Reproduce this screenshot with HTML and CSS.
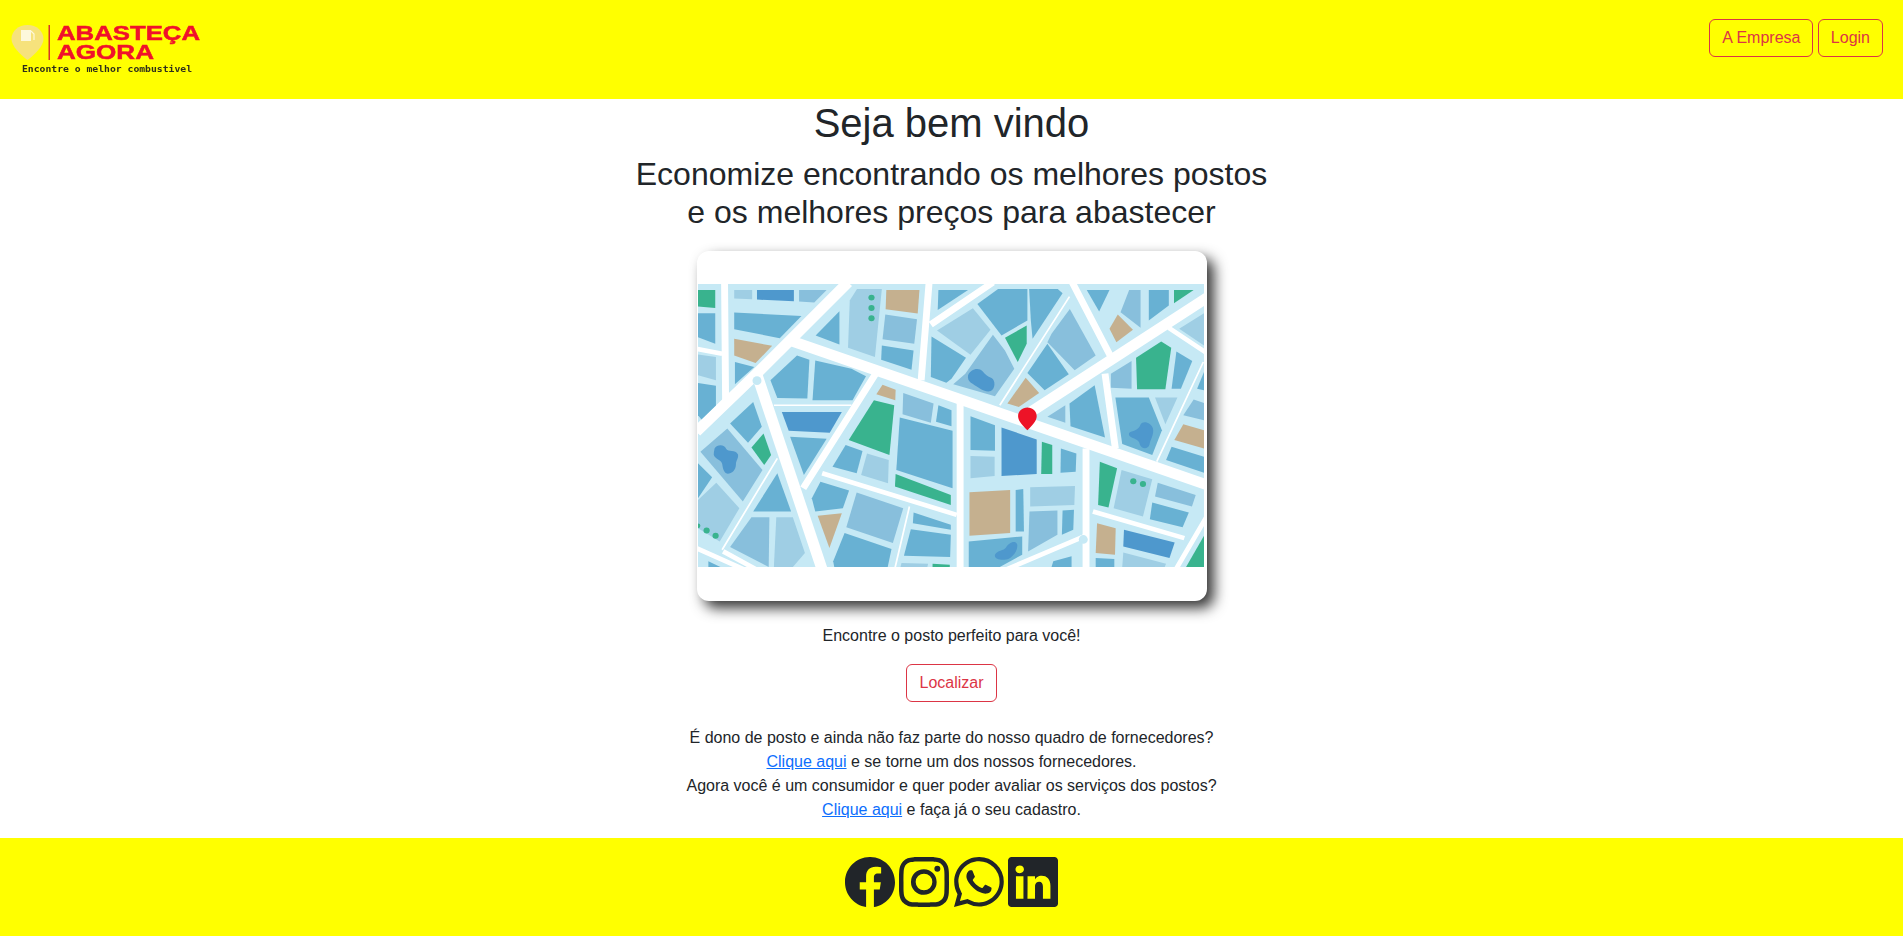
FILE: index.html
```html
<!DOCTYPE html>
<html lang="pt-BR">
<head>
<meta charset="UTF-8">
<meta name="viewport" content="width=device-width, initial-scale=1.0">
<title>Abasteça Agora</title>
<link rel="stylesheet" href="styles.css">
</head>
<body>

<header class="topbar">
    <a class="logo" href="#">
        <svg class="logo-art" viewBox="0 0 210 99" width="210" height="99">
            <path class="logo-pin" d="M27.500 25c9 0 16 6 16 14 0 7-9 16-16 21-7-5-16-14-16-21 0-8 7-14 16-14z"/>
            <path class="logo-pump" d="M21 30h10v11H21z"/>
            <path class="logo-hose" d="M31 31l3 3v6"/>
            <rect class="logo-bar" x="48.500" y="25" width="1.500" height="35"/>
            <text class="logo-name" x="57" y="40" textLength="143" lengthAdjust="spacingAndGlyphs">ABASTEÇA</text>
            <text class="logo-name" x="57" y="59" textLength="97" lengthAdjust="spacingAndGlyphs">AGORA</text>
            <text class="logo-tag" x="22" y="72" textLength="170" lengthAdjust="spacingAndGlyphs">Encontre o melhor combustivel</text>
        </svg>
    </a>
    <nav class="topbar-nav">
        <a class="btn" href="#">A Empresa</a>
        <a class="btn" href="#">Login</a>
    </nav>
</header>

<main class="content">
    <h1>Seja bem vindo</h1>
    <h2>Economize encontrando os melhores postos<br>e os melhores preços para abastecer</h2>

    <div class="map-card">
        <svg class="map" viewBox="55 130 1467 852" preserveAspectRatio="none">
            <rect class="m-edge" x="55" y="130" width="1467" height="852"/>
            <g class="roads">
                <path d="M322 300L1540 738"/>
                <path d="M490 125L225 400L50 575"/>
                <path d="M225 400L415 990"/>
                <path d="M1020 515L1540 165"/>
                <path class="r-mid" d="M815 470V990M1180 625V990M725 125L702 420M910 125L730 252M1140 125L1250 345M132 125L135 480M570 400L360 745M1235 400L1265 625"/>
                <path class="r-thin" d="M1420 262L1530 338M415 700L805 825M1200 815L1465 895M1530 830L1440 990M1178 888L925 1000M50 925L190 990M50 325L125 340M128 935L225 990"/>
                <path class="r-line" d="M1132 168L930 495M285 655L125 930M1520 365L1385 665M668 800L625 990M275 495H500"/>
            </g>
            <g class="m-mid">
                <polygon points="55,218 105,218 105,310 55,290"/>
                <polygon points="55,428 107,436 107,496 65,538 55,525"/>
                <polygon points="160,216 355,226 292,293 160,266"/>
                <polygon points="162,365 218,380 162,432"/>
                <polygon points="465,212 465,312 396,285"/>
                <polygon points="588,315 680,330 674,388 586,358"/>
                <polygon points="752,148 838,148 750,208"/>
                <polygon points="865,190 925,145 1010,145 1010,240 935,285"/>
                <polygon points="1015,145 1098,145 1112,158 1025,295 1020,240"/>
                <polygon points="732,288 832,352 790,415 775,427 730,410"/>
                <polygon points="1068,310 1130,402 1060,450 1010,398"/>
                <polygon points="1182,148 1248,148 1218,213"/>
                <polygon points="1362,148 1420,148 1420,195 1362,240"/>
                <polygon points="1442,333 1488,362 1455,445 1428,445"/>
                <polygon points="1522,395 1502,445 1522,450"/>
                <polygon points="1428,620 1522,650 1522,698 1412,660"/>
                <polygon points="1265,472 1362,472 1400,570 1372,645 1285,612"/>
                <polygon points="1132,490 1205,435 1235,592 1135,558"/>
                <polygon points="752,495 790,510 790,558 745,545"/>
                <polygon points="640,532 793,572 793,745 630,690"/>
                <polygon points="483,615 532,633 515,700 445,680"/>
                <polygon points="322,590 428,596 362,705"/>
                <polygon points="342,345 378,358 372,475 285,473 265,420"/>
                <polygon points="395,360 500,385 542,408 503,480 387,480"/>
                <polygon points="215,485 240,560 200,608 148,550"/>
                <polygon points="55,670 96,712 55,775"/>
                <polygon points="285,700 325,815 215,815"/>
                <polygon points="85,965 120,982 85,982"/>
                <polygon points="410,725 493,752 475,805 395,815 385,775"/>
                <polygon points="480,880 616,928 605,982 450,982 447,965"/>
                <polygon points="680,818 788,855 788,870 678,850"/>
                <polygon points="672,868 788,885 786,952 652,948"/>
                <polygon points="845,528 916,555 916,632 845,630"/>
                <polygon points="1107,625 1152,640 1150,695 1106,698"/>
                <polygon points="976,750 998,747 1000,875 976,875"/>
                <polygon points="1112,812 1145,810 1143,870 1110,885"/>
                <polygon points="840,905 995,890 995,945 930,982 840,982"/>
                <polygon points="1372,788 1478,818 1460,862 1365,838"/>
                <polygon points="1208,955 1262,958 1262,982 1208,982"/>
                <polygon points="1085,965 1138,950 1138,982 1080,982"/>
            </g>
            <g class="m-soft">
                <polygon points="348,148 428,148 392,186 348,183"/>
                <polygon points="598,222 690,236 682,310 590,296"/>
                <polygon points="910,283 945,330 972,385 916,468 795,432 830,400"/>
                <polygon points="1133,205 1208,345 1147,390 1068,305 1080,280"/>
                <polygon points="1305,148 1338,148 1338,262 1280,215"/>
                <polygon points="1312,362 1312,445 1252,442 1252,400"/>
                <polygon points="1492,478 1522,488 1522,540 1462,525"/>
                <polygon points="1120,495 1120,548 1068,530"/>
                <polygon points="650,458 738,490 730,548 648,522"/>
                <polygon points="140,565 242,690 185,785 62,635"/>
                <polygon points="210,832 262,832 260,982 148,922"/>
                <polygon points="515,758 650,805 620,910 485,862"/>
                <polygon points="1016,815 1097,812 1097,885 1012,935"/>
                <polygon points="1388,728 1498,765 1487,800 1380,770"/>
            </g>
            <g class="m-pale">
                <polygon points="55,342 107,350 107,420 55,405"/>
                <polygon points="160,148 212,148 212,176 160,174"/>
                <polygon points="495,180 516,145 588,145 568,350 490,322"/>
                <polygon points="748,270 852,203 903,268 845,343"/>
                <polygon points="1522,218 1522,315 1450,265"/>
                <polygon points="1380,472 1445,472 1410,552"/>
                <polygon points="545,640 608,660 606,730 528,705"/>
                <polygon points="108,728 175,805 118,905 55,865 55,780"/>
                <polygon points="282,832 330,832 365,940 330,982 275,982"/>
                <polygon points="645,970 722,972 720,982 642,982"/>
                <polygon points="845,648 915,650 915,708 845,715"/>
                <polygon points="1018,742 1148,738 1146,795 1018,800"/>
                <polygon points="1283,690 1372,718 1345,830 1260,805"/>
                <polygon points="1288,938 1412,972 1408,982 1285,982"/>
            </g>
            <g class="m-deep">
                <polygon points="226,148 333,148 333,182 226,177"/>
                <polygon points="298,515 472,515 437,578 318,572"/>
                <polygon points="935,562 1037,598 1037,702 935,708"/>
                <polygon points="1290,870 1437,908 1422,955 1288,920"/>
                <path d="M838 405c6-18 30-26 42-12 8 10 14 16 26 20 12 6 12 34-4 40-18 4-42-18-56-26-6-4-10-12-8-22z"/>
                <path d="M103 625c8-14 30-12 34 2 6 10 26 0 34 16 2 12-6 18-6 30 0 18-12 28-24 28-12-2-14-18-16-30-4-16-28-14-24-34z"/>
                <path d="M1310 575c14-4 24-10 28-22 8-14 32-4 36 12 4 18-8 34-10 48-4 16-24 14-28 0-2-12-12-16-22-20-12-4-12-16-4-18z"/>
                <path d="M916 945c6-14 26-12 32-22 6-12 26-24 32-10 4 14-8 36-24 44-14 6-44 4-40-12z"/>
            </g>
            <g class="m-green">
                <polygon points="55,148 105,148 105,202 55,198"/>
                <polygon points="1435,148 1492,148 1435,188"/>
                <polygon points="945,292 1008,255 1008,310 982,365"/>
                <polygon points="1325,352 1398,303 1427,322 1410,447 1328,447"/>
                <polygon points="565,480 624,495 610,645 492,600"/>
                <polygon points="628,702 788,765 788,795 626,740"/>
                <polygon points="245,580 267,645 247,675 210,622"/>
                <polygon points="735,972 785,975 785,982 735,982"/>
                <polygon points="1052,605 1082,615 1082,702 1050,702"/>
                <polygon points="1220,665 1270,685 1245,803 1215,795"/>
                <polygon points="1522,888 1522,982 1470,982"/>
                <circle cx="558" cy="171" r="9"/>
                <circle cx="558" cy="202" r="9"/>
                <circle cx="558" cy="233" r="9"/>
                <circle cx="80" cy="872" r="9"/>
                <circle cx="106" cy="888" r="9"/>
                <circle cx="55" cy="858" r="7"/>
                <circle cx="1317" cy="724" r="9"/>
                <circle cx="1345" cy="732" r="9"/>
            </g>
            <g class="m-tan">
                <polygon points="601,148 697,148 692,219 599,206"/>
                <polygon points="160,295 270,316 222,368 160,345"/>
                <polygon points="1005,412 1044,458 985,500 952,490"/>
                <polygon points="1272,222 1316,268 1268,305 1248,265"/>
                <polygon points="1462,552 1522,570 1522,625 1436,600"/>
                <polygon points="590,433 628,448 627,480 572,462"/>
                <polygon points="402,828 472,820 436,925"/>
                <polygon points="842,757 960,750 960,880 842,888"/>
                <polygon points="1212,850 1266,865 1264,945 1208,940"/>
            </g>
            <circle class="m-edge" cx="226" cy="421" r="13"/>
            <circle class="m-edge" cx="1172" cy="899" r="13"/>
            <path class="m-pin" d="M1010 502c15 0 27 11 27 26 0 15-15 30-27 42-12-12-27-27-27-42 0-15 12-26 27-26z"/>
        </svg>
    </div>

    <p class="lead">Encontre o posto perfeito para você!</p>
    <a class="btn" href="#">Localizar</a>

    <p class="info">
        É dono de posto e ainda não faz parte do nosso quadro de fornecedores?<br>
        <a href="#">Clique aqui</a> e se torne um dos nossos fornecedores.<br>
        Agora você é um consumidor e quer poder avaliar os serviços dos postos?<br>
        <a href="#">Clique aqui</a> e faça já o seu cadastro.
    </p>
</main>

<footer class="bottombar">
    <a href="#" aria-label="Facebook"><svg class="social" viewBox="0 0 16 16"><path d="M16 8.049c0-4.446-3.582-8.05-8-8.05C3.58 0-.002 3.603-.002 8.05c0 4.017 2.926 7.347 6.75 7.951v-5.625h-2.03V8.05H6.75V6.275c0-2.017 1.195-3.131 3.022-3.131.876 0 1.791.157 1.791.157v1.98h-1.009c-.993 0-1.303.621-1.303 1.258v1.51h2.218l-.354 2.326H9.25V16c3.824-.604 6.75-3.934 6.75-7.951z"/></svg></a>
    <a href="#" aria-label="Instagram"><svg class="social" viewBox="0 0 16 16"><path d="M8 0C5.829 0 5.556.01 4.703.048 3.85.088 3.269.222 2.76.42a3.917 3.917 0 0 0-1.417.923A3.927 3.927 0 0 0 .42 2.76C.222 3.268.087 3.85.048 4.7.01 5.555 0 5.827 0 8.001c0 2.172.01 2.444.048 3.297.04.852.174 1.433.372 1.942.205.526.478.972.923 1.417.444.445.89.719 1.416.923.51.198 1.09.333 1.942.372C5.555 15.99 5.827 16 8 16s2.444-.01 3.298-.048c.851-.04 1.434-.174 1.943-.372a3.916 3.916 0 0 0 1.416-.923c.445-.445.718-.891.923-1.417.197-.509.332-1.09.372-1.942C15.99 10.445 16 10.173 16 8s-.01-2.445-.048-3.299c-.04-.851-.175-1.433-.372-1.941a3.926 3.926 0 0 0-.923-1.417A3.911 3.911 0 0 0 13.24.42c-.51-.198-1.092-.333-1.943-.372C10.443.01 10.172 0 7.998 0h.003zm-.717 1.442h.718c2.136 0 2.389.007 3.232.046.78.035 1.204.166 1.486.275.373.145.64.319.92.599.28.28.453.546.598.92.11.281.24.705.275 1.485.039.843.047 1.096.047 3.231s-.008 2.389-.047 3.232c-.035.78-.166 1.203-.275 1.485a2.47 2.47 0 0 1-.599.919c-.28.28-.546.453-.92.598-.28.11-.704.24-1.485.276-.843.038-1.096.047-3.232.047s-2.39-.009-3.233-.047c-.78-.036-1.203-.166-1.485-.276a2.478 2.478 0 0 1-.92-.598 2.48 2.48 0 0 1-.6-.92c-.109-.281-.24-.705-.275-1.485-.038-.843-.046-1.096-.046-3.233 0-2.136.008-2.388.046-3.231.036-.78.166-1.204.276-1.486.145-.373.319-.64.599-.92.28-.28.546-.453.92-.598.282-.11.705-.24 1.485-.276.738-.034 1.024-.044 2.515-.045v.002zm4.988 1.328a.96.96 0 1 0 0 1.92.96.96 0 0 0 0-1.92zm-4.27 1.122a4.109 4.109 0 1 0 0 8.217 4.109 4.109 0 0 0 0-8.217zm0 1.441a2.667 2.667 0 1 1 0 5.334 2.667 2.667 0 0 1 0-5.334z"/></svg></a>
    <a href="#" aria-label="WhatsApp"><svg class="social" viewBox="0 0 16 16"><path d="M13.601 2.326A7.854 7.854 0 0 0 7.994 0C3.627 0 .068 3.558.064 7.926c0 1.399.366 2.76 1.057 3.965L0 16l4.204-1.102a7.933 7.933 0 0 0 3.79.965h.004c4.368 0 7.926-3.558 7.93-7.93A7.898 7.898 0 0 0 13.6 2.326zM7.994 14.521a6.573 6.573 0 0 1-3.356-.92l-.24-.144-2.494.654.666-2.433-.156-.251a6.56 6.56 0 0 1-1.007-3.505c0-3.626 2.957-6.584 6.591-6.584a6.56 6.56 0 0 1 4.66 1.931 6.557 6.557 0 0 1 1.928 4.66c-.004 3.639-2.961 6.592-6.592 6.592zm3.615-4.934c-.197-.099-1.17-.578-1.353-.646-.182-.065-.315-.099-.445.099-.133.197-.513.646-.627.775-.114.133-.232.148-.43.05-.197-.1-.836-.308-1.592-.985-.59-.525-.985-1.175-1.103-1.372-.114-.198-.011-.304.088-.403.087-.088.197-.232.296-.346.1-.114.133-.198.198-.33.065-.134.034-.248-.015-.347-.05-.099-.445-1.076-.612-1.47-.16-.389-.323-.335-.445-.34-.114-.007-.247-.007-.38-.007a.729.729 0 0 0-.529.247c-.182.198-.691.677-.691 1.654 0 .977.71 1.916.81 2.049.098.133 1.394 2.132 3.383 2.992.47.205.84.326 1.129.418.475.152.904.129 1.246.08.38-.058 1.171-.48 1.338-.943.164-.464.164-.86.114-.943-.049-.084-.182-.133-.38-.232z"/></svg></a>
    <a href="#" aria-label="LinkedIn"><svg class="social" viewBox="0 0 16 16"><path d="M0 1.146C0 .513.526 0 1.175 0h13.65C15.474 0 16 .513 16 1.146v13.708c0 .633-.526 1.146-1.175 1.146H1.175C.526 16 0 15.487 0 14.854V1.146zm4.943 12.248V6.169H2.542v7.225h2.401zm-1.2-8.212c.837 0 1.358-.554 1.358-1.248-.015-.709-.52-1.248-1.342-1.248-.822 0-1.359.54-1.359 1.248 0 .694.521 1.248 1.327 1.248h.016zm4.908 8.212V9.359c0-.216.016-.432.08-.586.173-.431.568-.878 1.232-.878.869 0 1.216.662 1.216 1.634v3.865h2.401V9.25c0-2.22-1.184-3.252-2.764-3.252-1.274 0-1.845.7-2.165 1.193v.025h-.016a5.54 5.54 0 0 1 .016-.025V6.169h-2.4c.03.678 0 7.225 0 7.225h2.4z"/></svg></a>
</footer>

</body>
</html>
```

FILE: styles.css
```css
/* Global styles */
body {
    font-family: "Liberation Sans", Arial, sans-serif;
    font-size: 16px;
    line-height: 1.5;
    color: #212529;
    margin: 0;
    padding: 0;
}
h1, h2 {
    font-weight: 400;
    line-height: 1.2;
    margin: 0 0 8px;
}
h1 {
    font-size: 40px;
}
h2 {
    font-size: 32px;
}
p {
    margin: 0 0 16px;
}
a {
    color: #0d6efd;
}

/* Header */
.topbar {
    height: 99px;
    background-color: #ff0;
    display: flex;
    justify-content: space-between;
    align-items: flex-start;
    padding-right: 20px;
}
.logo {
    display: block;
    height: 99px;
}
.logo-art {
    display: block;
    filter: blur(0.6px);
}
.logo-pin {
    fill: #f6e27c;
}
.logo-pump {
    fill: #fdf8dc;
}
.logo-hose {
    fill: none;
    stroke: #fdf8dc;
    stroke-width: 1.2px;
}
.logo-bar {
    fill: #d8352a;
}
.logo-name {
    font-size: 20px;
    font-weight: 700;
    fill: #f0112b;
    stroke: #f0112b;
    stroke-width: 0.5px;
}
.logo-tag {
    font-family: "DejaVu Sans Mono", monospace;
    font-size: 9px;
    font-weight: 700;
    fill: #2e2e1c;
}
.topbar-nav {
    display: flex;
    gap: 4.4px;
    padding-top: 19px;
}
.btn {
    display: inline-block;
    padding: 6px 12px;
    color: #dc3545;
    border: 1px solid #dc3545;
    border-radius: 6px;
    text-decoration: none;
}

/* Main content */
.content {
    text-align: center;
    height: 739px;
}
.map-card {
    width: 510px;
    height: 350px;
    box-sizing: border-box;
    margin: 19px auto 23px;
    padding: 33px 3px 34px 1px;
    background-color: #fff;
    border-radius: 12px;
    box-shadow: 7px 7px 14px rgba(0, 0, 0, 0.8);
}
.map {
    display: block;
    width: 100%;
    height: 100%;
}
.lead {
    margin-bottom: 16px;
}
.info {
    margin-top: 24px;
}

/* Map colours */
.m-edge {
    fill: #c6e9f5;
}
.m-mid {
    fill: #68b1d3;
}
.m-soft {
    fill: #88bfdc;
}
.m-pale {
    fill: #9fcee4;
}
.m-deep {
    fill: #4e98cd;
}
.m-green {
    fill: #39b38e;
}
.m-tan {
    fill: #c5b08f;
}
.m-pin {
    fill: #ed1327;
}
.roads path {
    fill: none;
    stroke: #fff;
    stroke-width: 32;
}
.roads .r-mid {
    stroke-width: 20;
}
.roads .r-thin {
    stroke-width: 14;
}
.roads .r-line {
    stroke-width: 5;
}

/* Footer */
.bottombar {
    height: 98px;
    box-sizing: border-box;
    background-color: #ff0;
    display: flex;
    justify-content: center;
    gap: 4.4px;
    padding-top: 19px;
}
.bottombar a {
    display: block;
    height: 50px;
}
.social {
    display: block;
    width: 50px;
    height: 50px;
    fill: #212529;
}
```
